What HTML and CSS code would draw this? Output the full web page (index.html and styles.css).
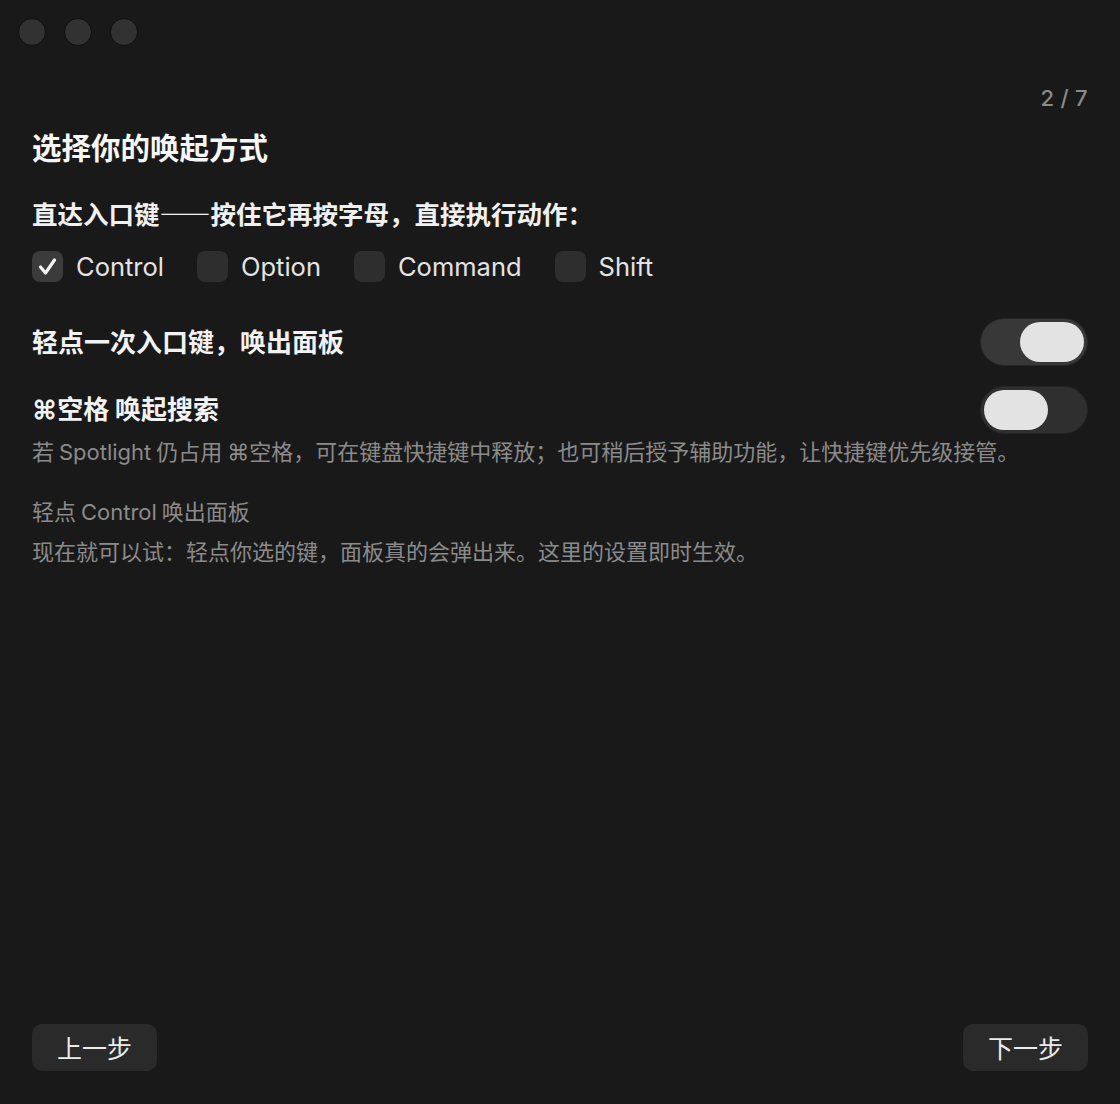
FILE: index.html
```html
<!DOCTYPE html>
<html lang="zh-CN">
<head>
<meta charset="utf-8">
<title>选择你的唤起方式</title>
<link rel="stylesheet" href="styles.css">
</head>
<body>
<div class="window">
  <div class="titlebar">
    <span class="light"></span><span class="light"></span><span class="light"></span>
  </div>
  <main class="content">
    <div class="step">2 / 7</div>
    <h1 class="title">选择你的唤起方式</h1>
    <div class="subtitle">直达入口键——按住它再按字母，直接执行动作：</div>
    <div class="checks">
      <label class="check">
        <span class="box checked">
          <svg viewBox="0 0 31 31" width="31" height="31"><polyline points="8.5,16 13.5,22 22.5,9" fill="none" stroke="#f2f2f2" stroke-width="3.2" stroke-linecap="round" stroke-linejoin="round"/></svg>
        </span>
        <span class="check-label">Control</span>
      </label>
      <label class="check"><span class="box"></span><span class="check-label">Option</span></label>
      <label class="check"><span class="box"></span><span class="check-label">Command</span></label>
      <label class="check"><span class="box"></span><span class="check-label">Shift</span></label>
    </div>
    <div class="row row-first">
      <div class="row-label">轻点一次入口键，唤出面板</div>
      <div class="toggle on"><span class="knob"></span></div>
    </div>
    <div class="row row-second">
      <div class="row-label"><span class="latin">⌘</span>空格 唤起搜索</div>
      <div class="toggle"><span class="knob"></span></div>
    </div>
    <p class="hint">若 <span class="latin">Spotlight</span> 仍占用 <span class="latin">⌘</span>空格，可在键盘快捷键中释放；也可稍后授予辅助功能，让快捷键优先级接管。</p>
    <p class="hint hint-gap">轻点 <span class="latin">Control</span> 唤出面板</p>
    <p class="hint hint-small-gap">现在就可以试：轻点你选的键，面板真的会弹出来。这里的设置即时生效。</p>
  </main>
  <footer class="footer">
    <button class="btn">上一步</button>
    <button class="btn">下一步</button>
  </footer>
</div>
</body>
</html>
```

FILE: styles.css
```css
* { box-sizing: border-box; }
html, body { margin: 0; padding: 0; height: 100%; }
body {
  background: #191919;
  color: #ececec;
  font-family: "Noto Sans CJK SC", Inter, sans-serif;
  text-spacing-trim: space-all;
}
.latin {
  font-family: Inter, "Noto Sans CJK SC", sans-serif;
}
.window {
  display: flex;
  flex-direction: column;
  height: 1104px;
}
.titlebar {
  display: flex;
  gap: 18px;
  padding: 18px 0 0 18px;
  height: 46px;
}
.light {
  width: 28px;
  height: 28px;
  border-radius: 50%;
  background: #323232;
  border: 1px solid #0f0f0f;
}
.content {
  padding: 0 32px;
  display: flex;
  flex-direction: column;
}
.step {
  margin-top: 38px;
  align-self: flex-end;
  font-family: Inter, sans-serif;
  font-size: 22px;
  line-height: 28px;
  font-weight: 500;
  color: #8a8a8a;
  letter-spacing: 0.3px;
}
.title {
  margin: 14px 0 0;
  font-size: 29.5px;
  line-height: 40px;
  font-weight: 700;
  color: #f6f6f6;
}
.subtitle {
  margin-top: 29px;
  font-size: 25.5px;
  line-height: 36px;
  font-weight: 700;
  color: #f0f0f0;
}
.checks {
  margin-top: 17px;
  display: flex;
  align-items: center;
  height: 36px;
  gap: 33px;
}
.check {
  display: flex;
  align-items: center;
  gap: 13px;
}
.box {
  width: 31px;
  height: 31px;
  border-radius: 8px;
  background: #2e2e2e;
  display: flex;
}
.box.checked { background: #3b3b3b; }
.check-label {
  font-family: Inter, sans-serif;
  font-size: 25.5px;
  color: #e4e4e4;
}
.row {
  display: flex;
  align-items: center;
  justify-content: space-between;
  height: 48px;
}
.row-first { margin-top: 34px; }
.row-second { margin-top: 20px; }
.row-label {
  font-size: 26px;
  line-height: 36px;
  font-weight: 700;
  color: #f2f2f2;
  padding-bottom: 3px;
}
.toggle {
  width: 108px;
  height: 48px;
  border-radius: 24px;
  background: #2f2f2f;
  border: 1px solid #252525;
  padding: 3px;
  display: flex;
  align-items: center;
  justify-content: flex-start;
}
.toggle.on {
  background: #383838;
  justify-content: flex-end;
}
.knob {
  width: 64px;
  height: 40px;
  border-radius: 20px;
  background: #e3e3e3;
}
.hint {
  margin: 1px 0 0;
  font-size: 22px;
  line-height: 30px;
  color: #8b8b8b;
}
.hint-gap { margin-top: 28px; }
.hint-small-gap { margin-top: 8px; }
.footer {
  margin-top: auto;
  display: flex;
  justify-content: space-between;
  padding: 0 32px 33px;
}
.btn {
  height: 47px;
  width: 125px;
  border: none;
  border-radius: 10px;
  background: #2a2a2a;
  color: #ececec;
  font-family: "Noto Sans CJK SC", sans-serif;
  font-size: 25px;
  line-height: 1;
  padding: 0;
}
```
